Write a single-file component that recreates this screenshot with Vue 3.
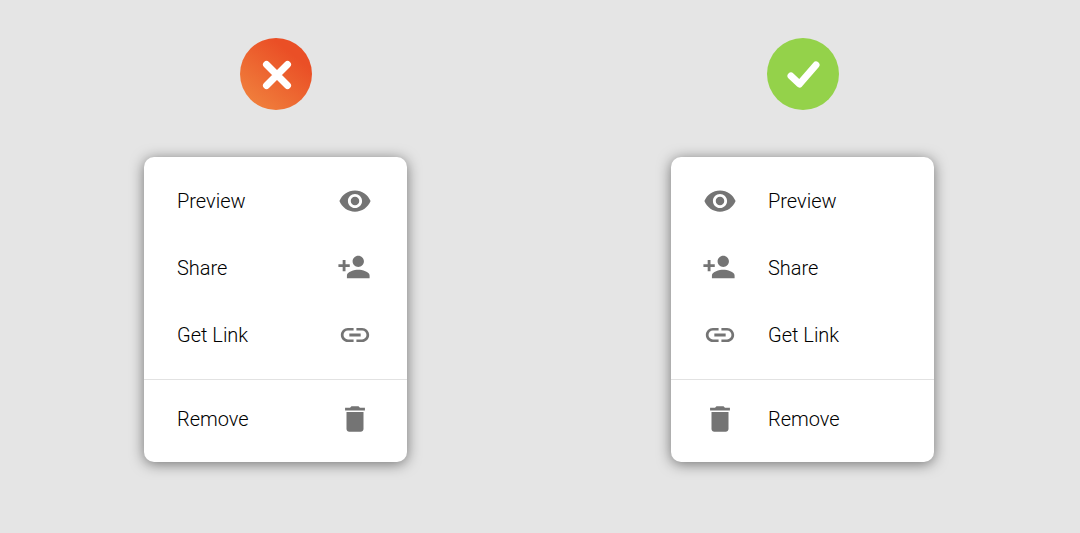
<script setup>
const items = [
  {
    label: 'Preview',
    path: 'M12 4.5C7 4.5 2.73 7.61 1 12c1.73 4.39 6 7.5 11 7.5s9.27-3.11 11-7.5c-1.73-4.39-6-7.5-11-7.5zM12 17c-2.76 0-5-2.24-5-5s2.24-5 5-5 5 2.24 5 5-2.24 5-5 5zm0-8c-1.66 0-3 1.34-3 3s1.34 3 3 3 3-1.34 3-3-1.34-3-3-3z',
  },
  {
    label: 'Share',
    path: 'M14.3 11.3c2.21 0 4-1.79 4-4s-1.79-4-4-4-4 1.79-4 4 1.79 4 4 4zm-9-2v-3h-2v3h-3v2h3v3h2v-3h3v-2h-3zm9 4c-2.67 0-8 1.34-8 4v2h16v-2c0-2.66-5.33-4-8-4z',
  },
  {
    label: 'Get Link',
    path: 'M3.9 12c0-1.71 1.39-3.1 3.1-3.1h4V7H7c-2.76 0-5 2.24-5 5s2.24 5 5 5h4v-1.9H7c-1.71 0-3.1-1.39-3.1-3.1zM8 13h8v-2H8v2zm9-6h-4v1.9h4c1.71 0 3.1 1.39 3.1 3.1s-1.39 3.1-3.1 3.1h-4V17h4c2.76 0 5-2.24 5-5s-2.24-5-5-5z',
  },
  {
    label: 'Remove',
    path: 'M6 19c0 1.1.9 2 2 2h8c1.1 0 2-.9 2-2V7H6v12zM19 4h-3.5l-1-1h-5l-1 1H5v2h14V4z',
    divided: true,
  },
]
const examples = [
  { id: 'wrong', icons: 'trailing' },
  { id: 'right', icons: 'leading' },
]
</script>

<template>
  <main class="comparison">
    <section v-for="example in examples" :key="example.id" class="example">
      <svg v-if="example.id === 'wrong'" class="badge" viewBox="0 0 72 72" role="img" aria-label="Incorrect">
        <defs>
          <linearGradient id="wrong-fill" x1="0.15" y1="0.9" x2="0.7" y2="0.2">
            <stop offset="0" stop-color="#f07f3c" />
            <stop offset="1" stop-color="#ea4f26" />
          </linearGradient>
        </defs>
        <circle cx="36" cy="36" r="36" fill="url(#wrong-fill)" />
        <path class="mark" d="M26.5 26.5L47.5 47.5M47.5 26.5L26.5 47.5" />
      </svg>
      <svg v-else class="badge" viewBox="0 0 72 72" role="img" aria-label="Correct">
        <circle cx="36" cy="36" r="36" fill="#94d24a" />
        <path class="mark" d="M24 38L32.5 46L49 27" />
      </svg>

      <ul class="menu" :class="example.icons">
        <li v-for="item in items" :key="item.label" :class="{ divided: item.divided }">
          <button type="button" class="item">
            <span>{{ item.label }}</span>
            <svg class="icon" viewBox="0 0 24 24" aria-hidden="true"><path :d="item.path" /></svg>
          </button>
        </li>
      </ul>
    </section>
  </main>
</template>

<style>
body {
  background: #e5e5e5;
}
</style>

<style scoped>
.comparison {
  box-sizing: border-box;
  min-height: 100vh;
  display: flex;
  flex-wrap: wrap;
  justify-content: center;
  gap: 48px 264px;
  padding: 38px 2px 38px 0;
  font-family: Roboto, "Liberation Sans", sans-serif;
}
.example {
  display: flex;
  flex-direction: column;
  align-items: center;
  gap: 47px;
}
.badge {
  width: 72px;
  height: 72px;
}
.mark {
  fill: none;
  stroke: #fff;
  stroke-width: 7;
  stroke-linecap: round;
  stroke-linejoin: round;
}
.menu {
  box-sizing: border-box;
  width: 263px;
  margin: 0;
  padding: 10px 0;
  list-style: none;
  background: #fff;
  border-radius: 10px;
  box-shadow: 0 2px 14px rgba(0, 0, 0, 0.5);
}
.divided {
  margin-top: 11px;
  padding-top: 5px;
  border-top: 1px solid #e2e2e2;
}
.item {
  width: 100%;
  height: 67px;
  display: flex;
  align-items: center;
  justify-content: space-between;
  padding: 0 35px 0 33px;
  border: 0;
  background: none;
  color: #000;
  font: 300 20px/24px Roboto, "Liberation Sans", sans-serif;
  text-align: left;
  cursor: pointer;
}
.leading .item {
  flex-direction: row-reverse;
  justify-content: flex-end;
  gap: 31px;
  padding: 0 32px;
}
.icon {
  width: 34px;
  height: 34px;
  flex: none;
  fill: #747474;
}
</style>
